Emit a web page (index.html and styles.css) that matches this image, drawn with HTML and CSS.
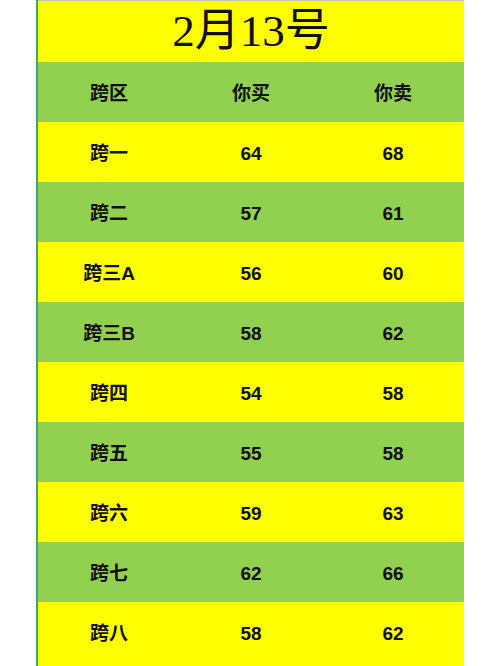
FILE: index.html
```html
<!DOCTYPE html>
<html lang="zh">
<head>
<meta charset="utf-8">
<link rel="stylesheet" href="styles.css">
</head>
<body>
<div class="sheet">
  <div class="title">2月13号</div>
  <div class="row green"><span>跨区</span><span>你买</span><span>你卖</span></div>
  <div class="row yellow"><span>跨一</span><span>64</span><span>68</span></div>
  <div class="row green"><span>跨二</span><span>57</span><span>61</span></div>
  <div class="row yellow"><span>跨三A</span><span>56</span><span>60</span></div>
  <div class="row green"><span>跨三B</span><span>58</span><span>62</span></div>
  <div class="row yellow"><span>跨四</span><span>54</span><span>58</span></div>
  <div class="row green"><span>跨五</span><span>55</span><span>58</span></div>
  <div class="row yellow"><span>跨六</span><span>59</span><span>63</span></div>
  <div class="row green"><span>跨七</span><span>62</span><span>66</span></div>
  <div class="row yellow"><span>跨八</span><span>58</span><span>62</span></div>
</div>
</body>
</html>
```
FILE: styles.css
```css
html, body {
  margin: 0;
  padding: 0;
  background: #ffffff;
  overflow: hidden;
}
.sheet {
  margin-left: 36px;
  width: 426px;
  border-left: 2px solid #3ca86c;
  min-height: 666px;
  background: #ffff00;
}
.title {
  height: 60px;
  padding-bottom: 1px;
  border-top: 1px solid #c4c4b0;
  display: flex;
  align-items: center;
  justify-content: center;
  font-family: "Liberation Serif", "Noto Sans CJK SC", serif;
  font-size: 45px;
  line-height: 1;
  color: #111;
  background: #ffff00;
}
.row {
  height: 60px;
  display: grid;
  grid-template-columns: 142px 142px 142px;
  align-items: center;
  justify-items: center;
  font-family: "Liberation Sans", "Noto Sans CJK SC", sans-serif;
  font-weight: bold;
  font-size: 19px;
  line-height: 1;
  color: #111;
}
.row span {
  padding-top: 2px;
}
.green { background: #92d050; }
.yellow { background: #ffff00; }
```
